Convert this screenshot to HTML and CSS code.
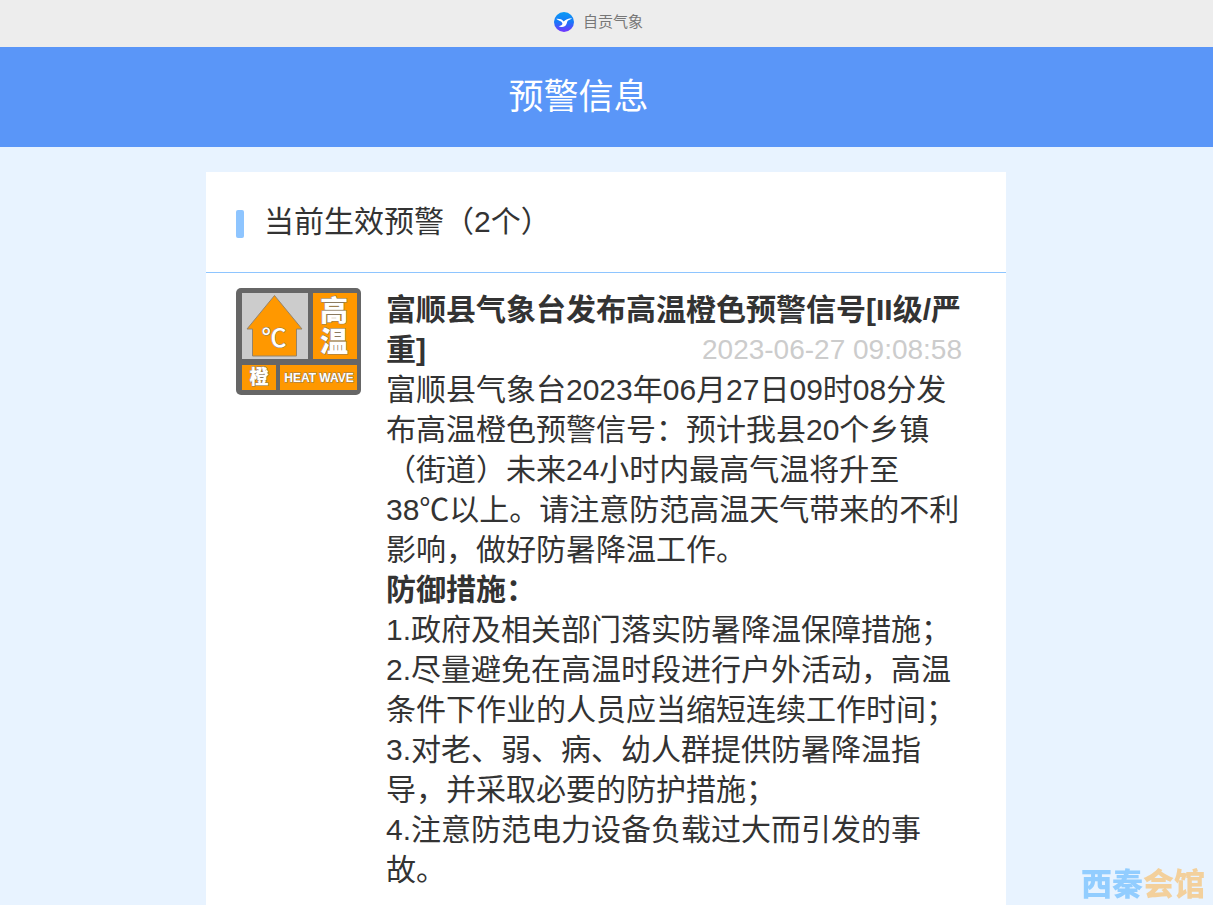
FILE: index.html
```html
<!DOCTYPE html>
<html lang="zh-CN">
<head>
<meta charset="utf-8">
<meta name="viewport" content="width=device-width, initial-scale=1">
<title>预警信息</title>
<link rel="stylesheet" href="styles.css">
</head>
<body>
<div class="source-bar">
  <svg class="source-logo" viewBox="0 0 20 20" aria-hidden="true">
    <defs><linearGradient id="logo-fill" x1="0" y1="0" x2="0" y2="1"><stop offset="0" stop-color="#0a9bf5"/><stop offset=".5" stop-color="#1878f8"/><stop offset="1" stop-color="#7433ff"/></linearGradient></defs>
    <circle cx="10" cy="10" r="10" fill="url(#logo-fill)"/>
    <path fill="#fff" d="M2.200 6.800C5.500 6.600 8.200 7.200 9.700 9.600C11.500 7.200 14 6.500 18 6.200C17 7.500 15.500 7.800 14 8.400C13 9.200 13.200 10.500 12.500 12C11.500 14.200 10 15 8 15C6.500 15 5.500 14.700 4.700 14.200C7 14 8.500 13 8.400 11.300C7.500 8.800 4.500 9 2.200 6.800Z"/>
  </svg>
  <span>自贡气象</span>
</div>
<header class="page-header"><h1 class="page-title">预警信息</h1></header>
<main class="content">
  <section class="card">
    <h2 class="card-title">当前生效预警（2个）</h2>
    <article class="alert">
      <svg class="alert-icon" viewBox="0 0 125 107" role="img" aria-label="高温橙色预警">
        <rect width="125" height="107" rx="5" fill="#666"/>
        <rect x="6" y="5" width="66" height="66" fill="#ccc"/>
        <rect x="77" y="5" width="44" height="66" fill="#ff9800"/>
        <rect x="6" y="77" width="34" height="25" fill="#ff9800"/>
        <rect x="44" y="77" width="77" height="25" fill="#ff9800"/>
        <path d="M38.500 7.500L66 41H60.500V68H16.500V41H11Z" fill="#ff9800" stroke="#94846b"/>
        <g class="icon-text">
          <text x="38" y="59" font-size="25" class="icon-degree">℃</text>
          <text x="98" y="33" font-size="28">高</text>
          <text x="98" y="64" font-size="28">温</text>
          <text x="23" y="96" font-size="19">橙</text>
          <text x="83" y="94" font-size="12">HEAT WAVE</text>
        </g>
      </svg>
      <div class="alert-body">
        <h3 class="alert-title">富顺县气象台发布高温橙色预警信号[II级/严重]<time class="alert-time" datetime="2023-06-27T09:08:58">2023-06-27 09:08:58</time></h3>
        <p>富顺县气象台2023年06月27日09时08分发布高温橙色预警信号：预计我县20个乡镇（街道）未来24小时内最高气温将升至38℃以上。请注意防范高温天气带来的不利影响，做好防暑降温工作。</p>
        <h4>防御措施：</h4>
        <p>1.政府及相关部门落实防暑降温保障措施；</p>
        <p>2.尽量避免在高温时段进行户外活动，高温条件下作业的人员应当缩短连续工作时间；</p>
        <p>3.对老、弱、病、幼人群提供防暑降温指导，并采取必要的防护措施；</p>
        <p>4.注意防范电力设备负载过大而引发的事故。</p>
      </div>
    </article>
  </section>
</main>
<div class="watermark">西秦<span class="watermark-accent">会馆</span></div>
</body>
</html>
```
FILE: styles.css
```css
* { box-sizing: border-box; }

body {
  display: flex;
  flex-direction: column;
  min-height: 100vh;
  margin: 0;
  background: #e8f3ff;
  color: #333;
  font-family: "Liberation Sans", "Noto Sans CJK SC", sans-serif;
  font-size: 30px;
  line-height: 40px;
}

h1, h2, h3, h4, p { margin: 0; }

.source-bar {
  display: flex;
  align-items: center;
  justify-content: center;
  gap: 9px;
  height: 47px;
  padding: 0 16px 4px 0;
  background: #ededed;
  color: #777;
  font-size: 15px;
  line-height: 20px;
}

.source-logo { width: 20px; height: 20px; }

.page-header {
  padding-right: 56px;
  background: #5a96f8;
  color: #fff;
  text-align: center;
}

.page-title {
  font-size: 35px;
  font-weight: 400;
  line-height: 100px;
}

.content {
  display: flex;
  flex: 1;
  justify-content: center;
  padding-top: 25px;
}

.card {
  width: 100%;
  max-width: 800px;
  margin-right: 1px;
  background: #fff;
}

.card-title {
  display: flex;
  align-items: center;
  gap: 20px;
  padding: 30px;
  border-bottom: 1px solid #8ec5ff;
  font-size: 30px;
  font-weight: 400;
}

.card-title::before {
  width: 8px;
  height: 28px;
  margin-top: 4px;
  border-radius: 2px;
  background: #8ec5ff;
  content: "";
}

.alert {
  display: flex;
  align-items: flex-start;
  gap: 25px;
  padding: 15px 44px 15px 30px;
}

.alert-icon {
  flex: none;
  width: 125px;
  height: 107px;
}

.icon-text {
  fill: #fff;
  stroke: #8a7a60;
  stroke-width: 1px;
  paint-order: stroke;
  font-family: "Liberation Sans", "Noto Sans CJK SC", sans-serif;
  font-weight: 900;
  text-anchor: middle;
}

.icon-degree { font-weight: 500; }

.alert-body { flex: 1; padding-top: 2px; }

.alert-title, .alert-body h4 { font-size: 30px; font-weight: 700; }

.alert-time {
  float: right;
  color: #ccc;
  font-size: 28px;
  font-weight: 400;
}

.watermark {
  position: fixed;
  right: 8px;
  bottom: 3px;
  color: #92cdff;
  font-family: "Noto Sans CJK SC", sans-serif;
  font-size: 31px;
  font-weight: 900;
}

.watermark-accent { color: #f3d09c; }
```
